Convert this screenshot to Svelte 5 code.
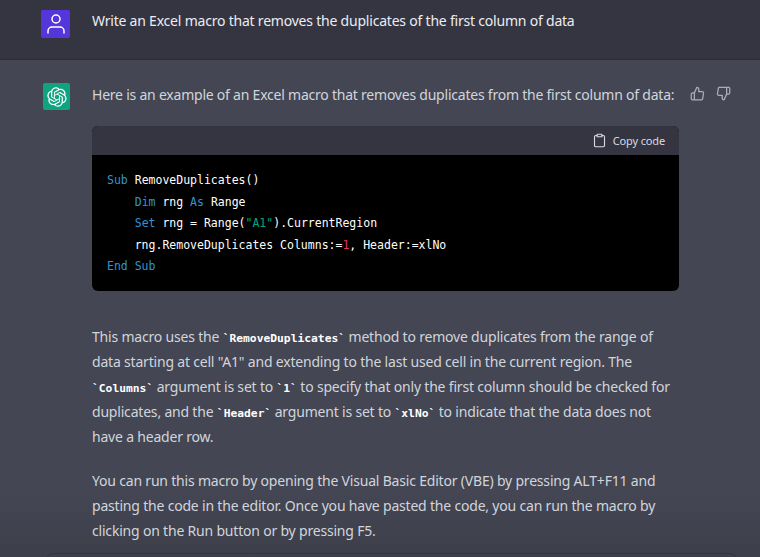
<script>
  const p1 = [
    'This macro uses the ', ['RemoveDuplicates'], ' method to remove duplicates from the range of data starting at cell "A1" and extending to the last used cell in the current region. The ',
    ['Columns'], ' argument is set to ', ['1'], ' to specify that only the first column should be checked for duplicates, and the ', ['Header'], ' argument is set to ', ['xlNo'], ' to indicate that the data does not have a header row.'
  ];
</script>

<div class="page">
  <section class="row user">
    <div class="gutter">
      <div class="avatar purple">
        <svg viewBox="0 0 24 24" width="24" height="24" fill="none" stroke="#fff" stroke-width="1.5" stroke-linecap="round" stroke-linejoin="round"><path d="M20 21v-2a4 4 0 0 0-4-4H8a4 4 0 0 0-4 4v2"/><circle cx="12" cy="7" r="4"/></svg>
      </div>
    </div>
    <p class="prompt">Write an Excel macro that removes the duplicates of the first column of data</p>
  </section>

  <section class="row bot">
    <div class="gutter">
      <div class="avatar green">
        <svg viewBox="0 0 41 41" width="20" height="20" fill="#fff"><path d="M37.5324 16.8707C37.9808 15.5241 38.1363 14.0974 37.9886 12.6859C37.8409 11.2744 37.3934 9.91076 36.676 8.68622C35.6126 6.83404 33.9882 5.3676 32.0373 4.4985C30.0864 3.62941 27.9098 3.40259 25.8215 3.85078C24.8796 2.7893 23.7219 1.94125 22.4257 1.36341C21.1295 0.785575 19.7249 0.491269 18.3058 0.500197C16.1708 0.495044 14.0893 1.16803 12.3614 2.42214C10.6335 3.67624 9.34853 5.44666 8.6917 7.47815C7.30085 7.76286 5.98686 8.3414 4.8377 9.17505C3.68854 10.0087 2.73073 11.0782 2.02839 12.312C0.956464 14.1591 0.498905 16.2988 0.721698 18.4228C0.944492 20.5467 1.83612 22.5449 3.268 24.1293C2.81966 25.4759 2.66413 26.9026 2.81182 28.3141C2.95951 29.7256 3.40701 31.0892 4.12437 32.3138C5.18791 34.1659 6.8123 35.6322 8.76321 36.5013C10.7141 37.3704 12.8907 37.5973 14.9789 37.1492C15.9208 38.2107 17.0786 39.0587 18.3747 39.6366C19.6709 40.2144 21.0755 40.5087 22.4946 40.4998C24.6307 40.5054 26.7133 39.8321 28.4418 38.5772C30.1704 37.3223 31.4556 35.5506 32.1119 33.5179C33.5027 33.2332 34.8167 32.6547 35.9659 31.821C37.115 30.9874 38.0728 29.9178 38.7752 28.684C39.8458 26.8371 40.3023 24.6979 40.0789 22.5748C39.8556 20.4517 38.9639 18.4544 37.5324 16.8707ZM22.4978 37.8849C20.7443 37.8874 19.0459 37.2733 17.6994 36.1501C17.7601 36.117 17.8666 36.0586 17.936 36.0161L25.9004 31.4156C26.1003 31.3019 26.2663 31.137 26.3813 30.9378C26.4964 30.7386 26.5563 30.5124 26.5549 30.2825V19.0542L29.9213 20.998C29.9389 21.0068 29.9541 21.0198 29.9656 21.0359C29.977 21.052 29.9842 21.0707 29.9867 21.0902V30.3889C29.9842 32.375 29.1946 34.2791 27.7909 35.6841C26.3872 37.0892 24.4838 37.8806 22.4978 37.8849ZM6.39227 31.0064C5.51397 29.4888 5.19742 27.7107 5.49804 25.9832C5.55718 26.0187 5.66048 26.0818 5.73461 26.1244L13.699 30.7248C13.8975 30.8408 14.1233 30.902 14.3532 30.902C14.583 30.902 14.8088 30.8408 15.0073 30.7248L24.731 25.1103V28.9979C24.7321 29.0177 24.7283 29.0376 24.7199 29.0556C24.7115 29.0736 24.6988 29.0893 24.6829 29.1012L16.6317 33.7497C14.9096 34.7416 12.8643 35.0097 10.9447 34.4954C9.02506 33.9811 7.38785 32.7263 6.39227 31.0064ZM4.29707 13.6194C5.17156 12.0998 6.55279 10.9364 8.19885 10.3327C8.19885 10.4013 8.19491 10.5228 8.19491 10.6071V19.808C8.19351 20.0378 8.25334 20.2638 8.36823 20.4629C8.48312 20.6619 8.64893 20.8267 8.84863 20.9404L18.5723 26.5542L15.206 28.4979C15.1894 28.5089 15.1703 28.5155 15.1505 28.5173C15.1307 28.5191 15.1107 28.516 15.0924 28.5082L7.04046 23.8557C5.32135 22.8601 4.06716 21.2235 3.55289 19.3046C3.03862 17.3858 3.30624 15.3413 4.29707 13.6194ZM31.955 20.0556L22.2312 14.4411L25.5976 12.4981C25.6142 12.4872 25.6333 12.4805 25.6531 12.4787C25.6729 12.4769 25.6928 12.4801 25.7111 12.4879L33.7631 17.1364C34.9967 17.849 36.0017 18.8982 36.6606 20.1613C37.3194 21.4244 37.6047 22.849 37.4832 24.2684C37.3617 25.6878 36.8382 27.0432 35.9743 28.1759C35.1103 29.3086 33.9415 30.1717 32.6047 30.6641C32.6047 30.5947 32.6047 30.4733 32.6047 30.3889V21.188C32.6066 20.9586 32.5474 20.7328 32.4332 20.5338C32.319 20.3348 32.154 20.1698 31.955 20.0556ZM35.3055 15.0128C35.2464 14.9765 35.1431 14.9142 35.069 14.8717L27.1045 10.2712C26.906 10.1554 26.6803 10.0943 26.4504 10.0943C26.2206 10.0943 25.9948 10.1554 25.7963 10.2712L16.0726 15.8858V11.9982C16.0715 11.9783 16.0753 11.9585 16.0837 11.9405C16.0921 11.9225 16.1048 11.9068 16.1207 11.8949L24.1719 7.25025C25.4053 6.53903 26.8158 6.19376 28.2383 6.25482C29.6608 6.31589 31.0364 6.78077 32.2044 7.59508C33.3723 8.40939 34.2842 9.53945 34.8334 10.8531C35.3826 12.1667 35.5464 13.6095 35.3055 15.0128ZM14.2424 21.9419L10.8752 19.9981C10.8576 19.9893 10.8423 19.9763 10.8309 19.9602C10.8195 19.9441 10.8122 19.9254 10.8098 19.9058V10.6071C10.8107 9.18295 11.2173 7.78848 11.9819 6.58696C12.7466 5.38544 13.8377 4.42659 15.1275 3.82264C16.4173 3.21869 17.8524 2.99464 19.2649 3.1767C20.6775 3.35876 22.0089 3.93941 23.1034 4.85067C23.0427 4.88379 22.937 4.94215 22.8668 4.98473L14.9024 9.58517C14.7025 9.69878 14.5366 9.86356 14.4215 10.0626C14.3065 10.2616 14.2466 10.4877 14.2479 10.7175L14.2424 21.9419ZM16.071 17.9991L20.4018 15.4978L24.7325 17.9975V22.9985L20.4018 25.4983L16.071 22.9985V17.9991Z"/></svg>
      </div>
    </div>
    <div class="content">
      <p class="intro">Here is an example of an Excel macro that removes duplicates from the first column of data:</p>

      <div class="code">
        <div class="code-head">
          <svg viewBox="0 0 24 24" width="15" height="15" fill="none" stroke="#d9d9e3" stroke-width="1.8" stroke-linecap="round" stroke-linejoin="round"><path d="M16 4h2a2 2 0 0 1 2 2v14a2 2 0 0 1-2 2H6a2 2 0 0 1-2-2V6a2 2 0 0 1 2-2h2"/><rect x="8" y="2" width="8" height="4" rx="1"/></svg>
          <span>Copy code</span>
        </div>
        <pre><span class="kw">Sub</span> RemoveDuplicates()
    <span class="kw">Dim</span> rng <span class="kw">As</span> Range
    <span class="kw">Set</span> rng = Range(<span class="str">"A1"</span>).CurrentRegion
    rng.RemoveDuplicates Columns:=<span class="num">1</span>, Header:=xlNo
<span class="kw">End Sub</span></pre>
      </div>

      <p class="para">{#each p1 as part}{#if Array.isArray(part)}<code>`{part[0]}`</code>{:else}{part}{/if}{/each}</p>

      <p class="para second">You can run this macro by opening the Visual Basic Editor (VBE) by pressing ALT+F11 and pasting the code in the editor. Once you have pasted the code, you can run the macro by clicking on the Run button or by pressing F5.</p>
    </div>
    <div class="thumbs">
      <svg viewBox="0 0 24 24" width="15" height="15" fill="none" stroke="#acacbe" stroke-width="2" stroke-linecap="round" stroke-linejoin="round"><path d="M14 9V5a3 3 0 0 0-3-3l-4 9v11h11.28a2 2 0 0 0 2-1.7l1.38-9a2 2 0 0 0-2-2.3zM7 22H4a2 2 0 0 1-2-2v-7a2 2 0 0 1 2-2h3"/></svg>
      <svg viewBox="0 0 24 24" width="15" height="15" fill="none" stroke="#acacbe" stroke-width="2" stroke-linecap="round" stroke-linejoin="round"><path d="M10 15v4a3 3 0 0 0 3 3l4-9V2H5.72a2 2 0 0 0-2 1.7l-1.38 9a2 2 0 0 0 2 2.3zm7-13h2.67A2.31 2.31 0 0 1 22 4v7a2.31 2.31 0 0 1-2.33 2H17"/></svg>
    </div>
  </section>

  <div class="fade"><div class="input"></div></div>
</div>

<style>
  :global(body) { margin: 0; background: #444654; }
  .page {
    position: relative;
    width: 760px;
    height: 557px;
    overflow: hidden;
    background: #444654;
    font-family: "Noto Sans", "Open Sans", sans-serif;
    font-size: 14px;
    color: #d1d5db;
  }
  .row { display: flex; position: relative; z-index: 1; }
  .user {
    height: 60px;
    box-sizing: border-box;
    background: #343541;
    border-bottom: 1px solid #2c2d36;
    padding-top: 10px;
  }
  .bot { padding-top: 23px; }
  .gutter { width: 92px; flex: none; display: flex; justify-content: flex-end; padding-right: 22px; box-sizing: border-box; }
  .avatar { display: flex; align-items: center; justify-content: center; border-radius: 2px; }
  .purple { width: 29px; height: 28px; background: #5436da; }
  .green { width: 27px; height: 27px; background: #10a37f; }
  .prompt { margin: 0; color: #ececf1; line-height: 21px; letter-spacing: -0.21px; }
  .content { width: 587px; flex: none; }
  .intro { margin: 0 0 20px; line-height: 23px; letter-spacing: -0.225px; white-space: nowrap; }
  .thumbs { display: flex; gap: 11px; margin-left: 11px; padding-top: 3px; align-items: flex-start; height: 20px; }
  .code { border-radius: 6px; overflow: hidden; background: #000; }
  .code-head {
    height: 29px;
    box-sizing: border-box;
    padding-bottom: 1px;
    background: #343541;
    display: flex;
    align-items: center;
    justify-content: flex-end;
    gap: 6px;
    padding-right: 14px;
    color: #d9d9e3;
    font-size: 11px;
    letter-spacing: -0.14px;
  }
  pre {
    margin: 0;
    padding: 15px 15px 14px;
    box-sizing: border-box;
    height: 136px;
    font-family: "DejaVu Sans Mono", "Liberation Mono", monospace;
    font-size: 11.5px;
    line-height: 21.5px;
    color: #fff;
    font-weight: 400;
  }
  .kw { color: #2e95d3; }
  .str { color: #00a67d; }
  .num { color: #df3079; }
  .para { margin: 33px 0 0; line-height: 25px; letter-spacing: -0.195px; }
  .second { margin-top: 19px; }
  code {
    font-family: "DejaVu Sans Mono", "Liberation Mono", monospace;
    font-weight: 700;
    font-size: 11.3px;
    line-height: 1;
    letter-spacing: 0;
    color: #fff;
  }
  .fade {
    position: absolute;
    left: 0; right: 0; bottom: 0;
    height: 65px;
    background: linear-gradient(180deg, rgba(53,55,64,0), rgba(53,55,64,0.5));
  }
  .input {
    position: absolute;
    top: 61px;
    left: 47px;
    width: 687px;
    height: 30px;
    border: 1px solid #34353f;
    border-radius: 6px;
    background: rgba(64,65,79,0.6);
  }
</style>
